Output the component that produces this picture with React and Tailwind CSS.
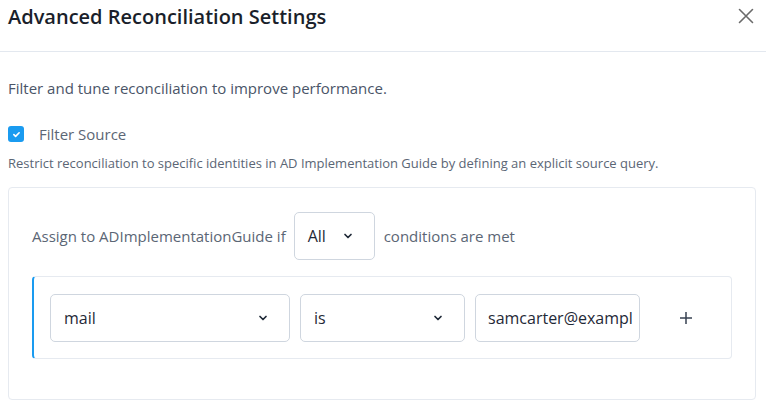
import React from 'react';

const Chevron = () => (
  <svg width="12" height="12" viewBox="0 0 24 24" fill="none" stroke="#1f2937" strokeWidth="3.4" strokeLinecap="round" strokeLinejoin="round">
    <path d="M6 9l6 6 6-6" />
  </svg>
);

const Select = ({ value, className }) => (
  <div className={`flex items-center justify-between h-[48px] pl-[13px] pr-[20px] border border-[#cfd6df] rounded-[5px] bg-white text-[16px] text-[#1f2937] ${className}`}>
    <span>{value}</span>
    <Chevron />
  </div>
);

export default function App() {
  return (
    <div className="w-[766px] h-[408px] bg-white overflow-hidden" style={{ fontFamily: '"Open Sans", "Noto Sans", sans-serif' }}>
      <div className="flex items-start justify-between h-[52px] pl-[8px] pr-[12px] border-b border-[#e3e8ef]">
        <h1 className="text-[20px] leading-[28px] font-semibold text-[#1a1f2b] mt-[3px]">Advanced Reconciliation Settings</h1>
        <svg width="16" height="16" viewBox="0 0 16 16" className="mt-[8px]" stroke="#6b6b6b" strokeWidth="1.6" strokeLinecap="round">
          <path d="M1.5 1.5l13 13M14.5 1.5l-13 13" />
        </svg>
      </div>
      <div className="pl-[8px] pr-[10px]">
        <p className="mt-[24px] text-[15px] leading-[24px] text-[#4a5568]">Filter and tune reconciliation to improve performance.</p>
        <div className="flex items-center mt-[22px] h-[24px]">
          <div className="w-[16px] h-[16px] rounded-[3px] bg-[#1a9bf0] flex items-center justify-center">
            <svg width="9" height="9" viewBox="0 0 12 12" fill="none" stroke="white" strokeWidth="2.2" strokeLinecap="round" strokeLinejoin="round">
              <path d="M2.5 6.2l2.3 2.3 4.7-4.8" />
            </svg>
          </div>
          <span className="ml-[15px] text-[15px] text-[#5b6675]">Filter Source</span>
        </div>
        <p className="mt-[7px] text-[13px] leading-[20px] text-[#5b6675]">Restrict reconciliation to specific identities in AD Implementation Guide by defining an explicit source query.</p>
        <div className="mt-[14px] h-[213px] border border-[#e6eaf0] rounded-[4px] pt-[24px] px-[23px]">
          <div className="flex items-center">
            <span className="text-[15px] text-[#5b6675]">Assign to ADImplementationGuide if</span>
            <Select value="All" className="ml-[8px] w-[81px]" />
            <span className="ml-[9px] text-[15px] text-[#5b6675]">conditions are met</span>
          </div>
          <div className="mt-[16px] h-[83px] border border-[#e6eaf0] border-l-2 border-l-[#1a9bf0] rounded-[4px] flex items-center pl-[16px]">
            <Select value="mail" className="w-[240px]" />
            <Select value="is" className="ml-[10px] w-[165px]" />
            <input
              readOnly
              value="samcarter@example.com"
              className="ml-[10px] w-[165px] h-[48px] border border-[#cfd6df] rounded-[5px] pl-[12px] pr-[7px] text-[16px] text-[#1f2937] outline-none"
            />
            <svg width="14" height="14" viewBox="0 0 14 14" className="ml-[39px]" stroke="#374151" strokeWidth="1.5">
              <path d="M7 1v12M1 7h12" />
            </svg>
          </div>
        </div>
      </div>
    </div>
  );
}
